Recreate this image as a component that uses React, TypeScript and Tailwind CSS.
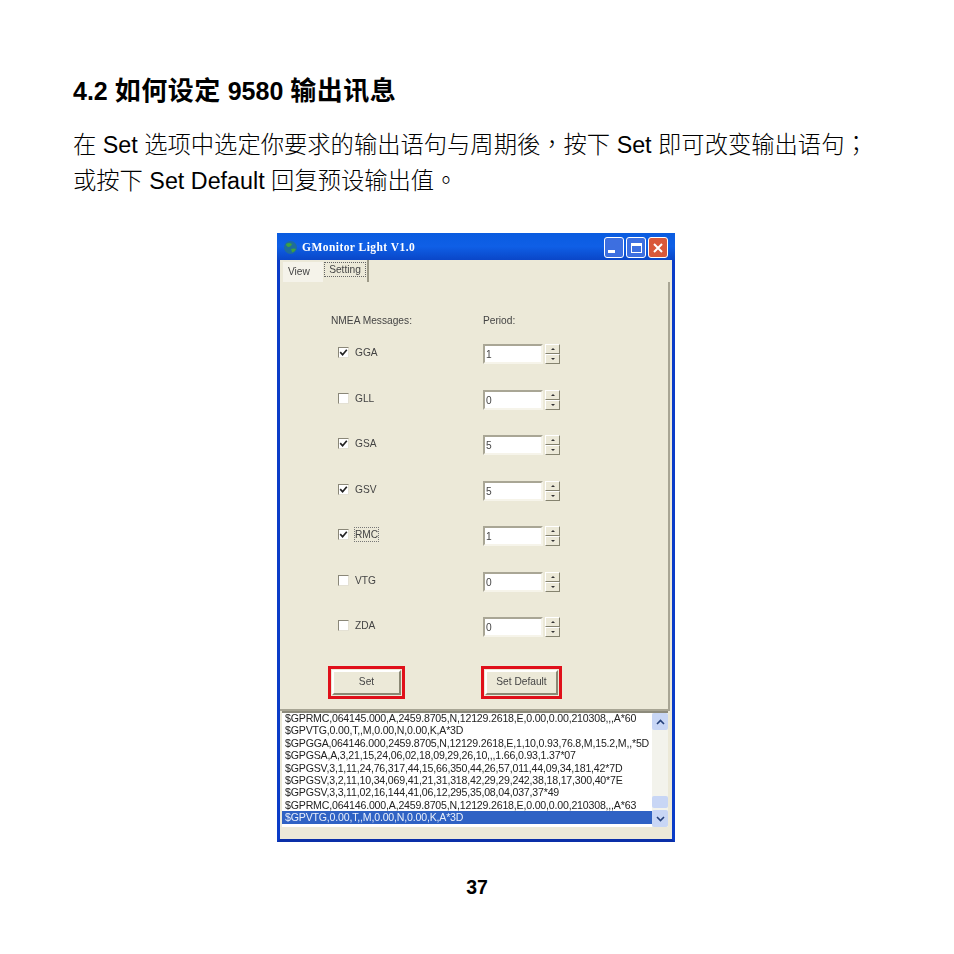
const sans = "font-['Liberation_Sans','Noto_Sans_CJK_SC',sans-serif]"
const punct = "font-['Noto_Sans_CJK_TC',sans-serif] leading-none"

const messages = [
  { name: 'GGA', on: true, period: '1' },
  { name: 'GLL', on: false, period: '0' },
  { name: 'GSA', on: true, period: '5' },
  { name: 'GSV', on: true, period: '5' },
  { name: 'RMC', on: true, period: '1', focus: true },
  { name: 'VTG', on: false, period: '0' },
  { name: 'ZDA', on: false, period: '0' },
]

const logLines = [
  '$GPRMC,064145.000,A,2459.8705,N,12129.2618,E,0.00,0.00,210308,,,A*60',
  '$GPVTG,0.00,T,,M,0.00,N,0.00,K,A*3D',
  '$GPGGA,064146.000,2459.8705,N,12129.2618,E,1,10,0.93,76.8,M,15.2,M,,*5D',
  '$GPGSA,A,3,21,15,24,06,02,18,09,29,26,10,,,1.66,0.93,1.37*07',
  '$GPGSV,3,1,11,24,76,317,44,15,66,350,44,26,57,011,44,09,34,181,42*7D',
  '$GPGSV,3,2,11,10,34,069,41,21,31,318,42,29,29,242,38,18,17,300,40*7E',
  '$GPGSV,3,3,11,02,16,144,41,06,12,295,35,08,04,037,37*49',
  '$GPRMC,064146.000,A,2459.8705,N,12129.2618,E,0.00,0.00,210308,,,A*63',
]

function Check({ on }: { on: boolean }) {
  return (
    <div className="w-[11px] h-[11px] bg-white border border-t-[#8a8778] border-l-[#8a8778] border-r-[#e4e1d4] border-b-[#e4e1d4] flex items-center justify-center">
      {on && (
        <svg width="9" height="9" viewBox="0 0 9 9">
          <path d="M1.2 4.2 L3.6 6.8 L7.8 1.8" fill="none" stroke="#222" strokeWidth="1.7" />
        </svg>
      )}
    </div>
  )
}

function SpinButton({ up }: { up: boolean }) {
  return (
    <div className="w-[15px] h-[10px] bg-[#ece9d8] border border-t-white border-l-white border-r-[#85836f] border-b-[#85836f] flex items-center justify-center">
      <div className={up
        ? 'w-0 h-0 border-x-[2px] border-x-transparent border-b-[2px] border-b-[#333]'
        : 'w-0 h-0 border-x-[2px] border-x-transparent border-t-[2px] border-t-[#333]'} />
    </div>
  )
}

function MessageRow({ name, on, period, focus }: { name: string; on: boolean; period: string; focus?: boolean }) {
  return (
    <div className="h-[45.5px] flex items-start">
      <div className="w-[152px] pl-[7px] pt-[5px] flex items-center gap-[6px]">
        <Check on={on} />
        <span className={focus ? 'text-[10.2px] leading-[13px] text-[#444] outline outline-1 outline-dotted outline-[#777]' : 'text-[10.2px] leading-[13px] text-[#444]'}>{name}</span>
      </div>
      <div className="flex gap-[2px] pt-[3px]">
        <div className="w-[60px] h-[20px] bg-white border-2 border-t-[#a9a695] border-l-[#a9a695] border-r-[#f6f4ea] border-b-[#f6f4ea] text-[10.2px] leading-[17px] pl-[1px] text-[#444]">{period}</div>
        <div className="flex flex-col">
          <SpinButton up />
          <SpinButton up={false} />
        </div>
      </div>
    </div>
  )
}

function TitleButton({ color, children }: { color: string; children: React.ReactNode }) {
  return (
    <div className={`w-[20px] h-[21px] rounded-[3px] border border-white flex items-center justify-center ${color}`}>
      {children}
    </div>
  )
}

function GmonitorWindow() {
  return (
    <div className={`w-[398px] h-[609px] ml-[204px] mt-[34px] flex flex-col border-x-[3px] border-b-[3px] border-x-[#0a3cc8] border-b-[#0a2fa8] bg-[#ece9d8] blur-[0.4px] ${sans}`}>
      <div className="h-[27px] -mx-[3px] pl-[6px] pr-[7px] pt-[2px] bg-gradient-to-b from-[#0a5ce0] via-[#0f5fe6] to-[#0a46c8] flex items-center shrink-0">
        <svg width="15" height="15" viewBox="0 0 15 15">
          <circle cx="7.5" cy="7.5" r="6.5" fill="#1f6d9b" />
          <path d="M3 4 Q6 2 9 4 Q8 7 5 7 Q3 6 3 4Z M8 9 Q11 8 13 9 Q11 13 9 12Z" fill="#3fa33f" />
        </svg>
        <span className="ml-[4px] font-['Liberation_Serif','DejaVu_Serif',serif] font-bold text-[11.5px] tracking-[0.45px] text-white">GMonitor Light V1.0</span>
        <div className="ml-auto flex gap-[2px]">
          <TitleButton color="bg-[#3d6fe0]">
            <div className="w-[7px] h-[3px] bg-white mt-[8px] -ml-[5px]" />
          </TitleButton>
          <TitleButton color="bg-[#3d6fe0]">
            <div className="w-[11px] h-[10px] border border-t-[3px] border-white" />
          </TitleButton>
          <TitleButton color="bg-[#d9583a]">
            <svg width="12" height="12" viewBox="0 0 12 12">
              <path d="M2 2 L10 10 M10 2 L2 10" stroke="#fff" strokeWidth="2" />
            </svg>
          </TitleButton>
        </div>
      </div>

      <div className="h-[22px] flex items-end pl-[3px] shrink-0 text-[10.2px] text-[#444]">
        <div className="w-[40px] h-[20px] bg-[#f5f3ea] pl-[5px] leading-[19px]">View</div>
        <div className="w-[46px] h-[22px] border-r-2 border-r-[#9d9a88] pl-[1px] pt-[2px]">
          <div className="border border-dotted border-[#666] leading-[13px] w-[42px] text-center">Setting</div>
        </div>
      </div>

      <div className="flex-1 flex flex-col border-r-2 border-r-[#a8a594] border-b-2 border-b-[#a8a594] pl-[51px] mr-[2px]">
        <div className="flex text-[10.2px] text-[#444] pt-[31px] h-[59px] shrink-0">
          <span className="w-[152px]">NMEA Messages:</span>
          <span>Period:</span>
        </div>
        {messages.map((m) => (
          <MessageRow key={m.name} {...m} />
        ))}
        <div className="flex -ml-[3px] mt-[6.5px]">
          <div className="w-[77px] h-[33px] border-[3px] border-[#e0101a] p-[1px]">
            <div className="h-full bg-[#ece9d8] border-2 border-t-white border-l-white border-r-[#8a8874] border-b-[#8a8874] text-center text-[10.2px] leading-[20px] text-[#444]">Set</div>
          </div>
          <div className="w-[81px] h-[33px] ml-[76px] border-[3px] border-[#e0101a] p-[1px]">
            <div className="h-full bg-[#ece9d8] border-2 border-t-white border-l-white border-r-[#8a8874] border-b-[#8a8874] text-center text-[10.2px] leading-[20px] text-[#444]">Set Default</div>
          </div>
        </div>
      </div>

      <div className="h-[116px] ml-[2px] mr-[4px] flex bg-white border-t-2 border-t-[#8d8b7c] shrink-0">
        <div className="flex-1 -mt-[1px] text-[10.6px] leading-[12.4px] tracking-[-0.19px] text-[#222] whitespace-nowrap overflow-hidden">
          {logLines.map((line) => (
            <div key={line} className="pl-[3px]">{line}</div>
          ))}
          <div className="pl-[3px] bg-[#2f62c4] text-[#e8eefa]">$GPVTG,0.00,T,,M,0.00,N,0.00,K,A*3D</div>
        </div>
        <div className="w-[16px] flex flex-col bg-[#f3f3ec]">
          <div className="h-[17px] bg-[#c8d6f5] rounded-[2px] flex items-center justify-center">
            <svg width="9" height="6" viewBox="0 0 9 6"><path d="M1 5 L4.5 1.5 L8 5" fill="none" stroke="#24407a" strokeWidth="1.6" /></svg>
          </div>
          <div className="flex-1" />
          <div className="h-[12px] bg-[#c8d6f5] rounded-[2px]" />
          <div className="h-[17px] mt-[2px] bg-[#c8d6f5] rounded-[2px] flex items-center justify-center">
            <svg width="9" height="6" viewBox="0 0 9 6"><path d="M1 1 L4.5 4.5 L8 1" fill="none" stroke="#24407a" strokeWidth="1.6" /></svg>
          </div>
        </div>
      </div>
      <div className="h-[12px] shrink-0" />
    </div>
  )
}

export default function App() {
  return (
    <div className={`w-[954px] h-[954px] bg-white text-black pl-[73px] pt-[73px] ${sans}`}>
      <h1 className="text-[25px] leading-[36px] font-bold whitespace-nowrap">
        4.2 <span className="text-[26px] tracking-[0.5px]">如何设定</span> 9580 <span className="text-[26px] tracking-[0.5px]">输出讯息</span>
      </h1>
      <div className="mt-[18px] text-[23.3px] leading-[36px] font-light whitespace-nowrap">
        <p className="h-[36px]">在 Set 选项中选定你要求的输出语句与周期後<span className={punct}>，</span>按下 Set 即可改变输出语句<span className={punct}>；</span></p>
        <p className="h-[36px]">或按下 Set Default 回复预设输出值<span className={punct}>。</span></p>
      </div>
      <GmonitorWindow />
      <p className="w-[808px] mt-[33px] text-center text-[19.5px] leading-[24px] font-bold">37</p>
    </div>
  )
}
